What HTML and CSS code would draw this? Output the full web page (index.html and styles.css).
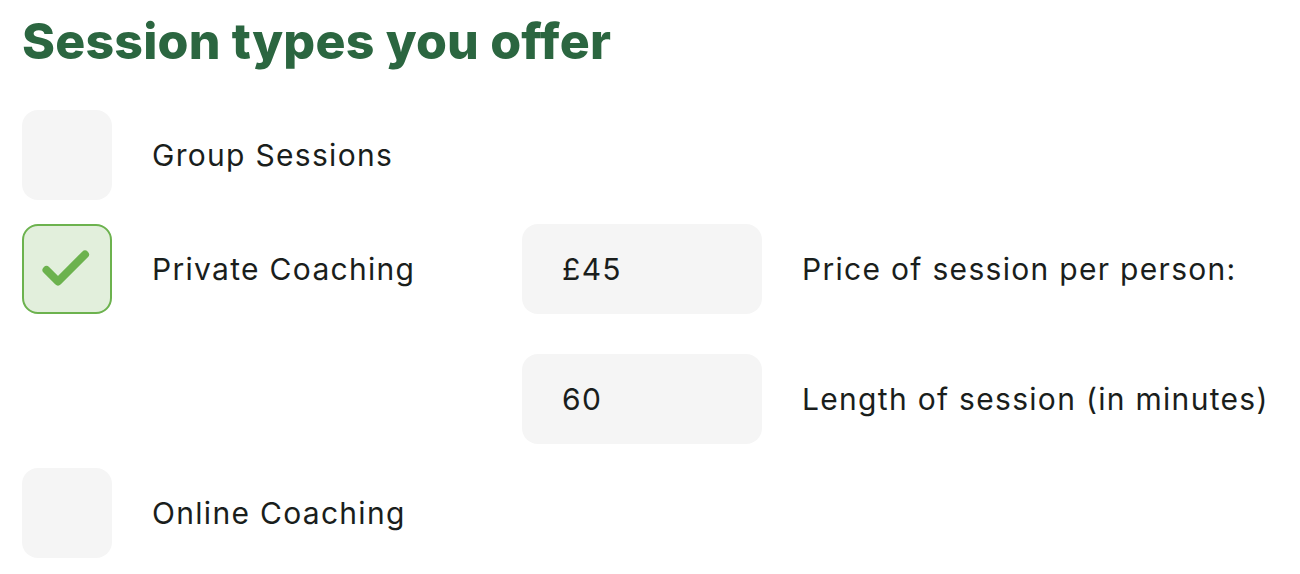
FILE: index.html
```html
<!DOCTYPE html>
<html lang="en">
<head>
<meta charset="utf-8">
<title>Session types you offer</title>
<link rel="stylesheet" href="styles.css">
</head>
<body>
<main class="page">
  <h1 class="title">Session types you offer</h1>
  <div class="rows">
    <div class="row">
      <span class="check"></span>
      <span class="label">Group Sessions</span>
    </div>
    <div class="row">
      <span class="check check--on">
        <svg viewBox="0 0 90 90" width="90" height="90" aria-hidden="true"><path d="M24.5 46 L36 57.5 L63 30.5" fill="none" stroke="#6cb24e" stroke-width="8" stroke-linecap="round" stroke-linejoin="round"/></svg>
      </span>
      <span class="label">Private Coaching</span>
      <span class="field">£45</span>
      <span class="label">Price of session per person:</span>
    </div>
    <div class="row row--spaced">
      <span class="empty"></span>
      <span class="empty"></span>
      <span class="field">60</span>
      <span class="label">Length of session (in minutes)</span>
    </div>
    <div class="row">
      <span class="check"></span>
      <span class="label">Online Coaching</span>
    </div>
  </div>
</main>
</body>
</html>
```
FILE: styles.css
```css
html, body {
  margin: 0;
  padding: 0;
  background: #ffffff;
}
body {
  font-family: Inter, "Noto Sans", sans-serif;
  color: #1a1e1c;
}
.page {
  padding: 12px 22px 0 22px;
}
.title {
  margin: 0;
  font-family: Inter, sans-serif;
  font-weight: 800;
  font-size: 50px;
  line-height: 58px;
  color: #2b6640;
  letter-spacing: 0.2px;
}
.rows {
  margin-top: 40px;
  display: flex;
  flex-direction: column;
  gap: 24px;
}
.row {
  display: grid;
  grid-template-columns: 90px 330px 240px 1fr;
  column-gap: 40px;
  align-items: center;
  height: 90px;
}
.row--spaced {
  margin-top: 16px;
}
.check {
  box-sizing: border-box;
  width: 90px;
  height: 90px;
  border-radius: 16px;
  background: #f5f5f5;
  display: block;
}
.check--on {
  background: #e2efdc;
  border: 2px solid #6cb24e;
}
.check--on svg {
  display: block;
  margin: -2px;
}
.label {
  font-size: 30px;
  line-height: 36px;
  letter-spacing: 1.3px;
  white-space: nowrap;
}
.field {
  box-sizing: border-box;
  height: 90px;
  border-radius: 16px;
  background: #f5f5f5;
  padding: 0 40px;
  display: flex;
  align-items: center;
  font-size: 30px;
  letter-spacing: 1.3px;
}
```
